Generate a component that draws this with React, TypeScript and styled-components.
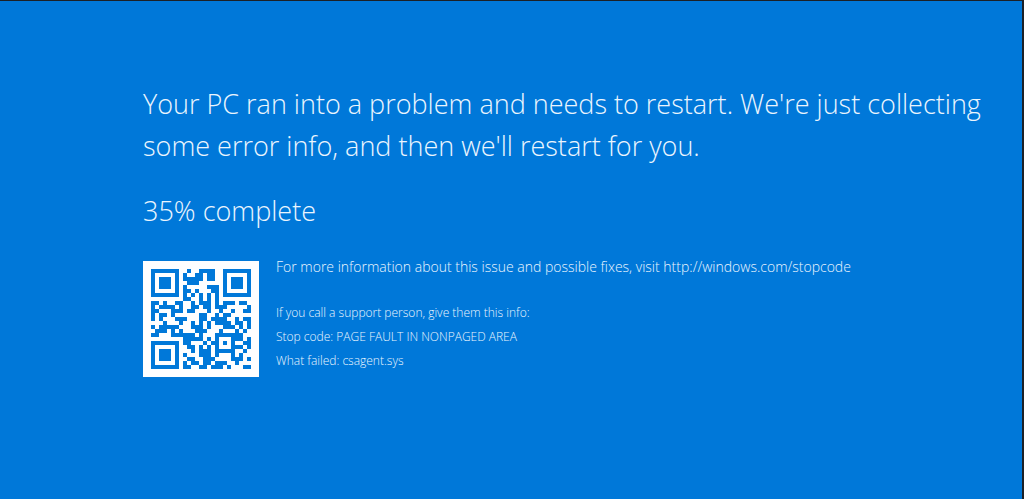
import React from "react";
import styled, { createGlobalStyle } from "styled-components";

const GlobalStyle = createGlobalStyle`
  *, *::before, *::after { box-sizing: border-box; }
  body { margin: 0; background: #1c2024; }
`;

const Screen = styled.main`
  min-height: 100vh;
  padding: 82px 40px 40px 143px;
  border: solid #1c2127;
  border-width: 1px 2px 0 0;
  background: #0078d9;
  color: #ebf5fe;
  font-family: "Open Sans", "Noto Sans", sans-serif;
  font-weight: 300;
`;

const Message = styled.h1`
  margin: 0;
  font-size: 27px;
  font-weight: 300;
  line-height: 42px;
`;

const Progress = styled.p`
  margin: 23px 0 0;
  font-size: 27px;
  line-height: 42px;
`;

const Details = styled.section`
  display: flex;
  align-items: flex-start;
  gap: 17px;
  margin-top: 29px;
`;

const CodeCard = styled.div`
  flex: none;
  padding: 8px;
  background: #fdfeff;
`;

const CodeImage = styled.svg`
  display: block;
  width: 100px;
  height: 100px;
`;

const Info = styled.div`
  flex: 1;
  min-width: 0;
`;

const Lead = styled.p`
  margin: 0 0 28px;
  font-size: 14px;
  line-height: 12px;
`;

const InfoLine = styled.p`
  margin: 0;
  font-size: 12px;
  line-height: 24px;
`;

const Link = styled.a`
  color: inherit;
  text-decoration: none;
`;

const SIZE = 25;
const DATA_WORDS = 34;
const CHECK_WORDS = 10;
const FORMAT_BITS = "110100101110110";

function multiply(a: number, b: number): number {
  let out = 0;
  for (let i = 7; i >= 0; i--) {
    out = (out << 1) ^ ((out >> 7) * 0x11d);
    if ((b >> i) & 1) out ^= a;
  }
  return out;
}

function checkWords(data: number[]): number[] {
  const divisor: number[] = Array(CHECK_WORDS).fill(0);
  divisor[CHECK_WORDS - 1] = 1;
  let root = 1;
  for (let i = 0; i < CHECK_WORDS; i++) {
    for (let j = 0; j < CHECK_WORDS; j++) {
      divisor[j] = multiply(divisor[j], root);
      if (j + 1 < CHECK_WORDS) divisor[j] ^= divisor[j + 1];
    }
    root = multiply(root, 2);
  }
  const rest: number[] = Array(CHECK_WORDS).fill(0);
  for (const word of data) {
    const factor = word ^ (rest.shift() as number);
    rest.push(0);
    divisor.forEach((d, i) => (rest[i] ^= multiply(d, factor)));
  }
  return rest;
}

/* Encodes up to 32 ASCII characters as a version 2-L code with mask 7. */
function encode(text: string): boolean[][] {
  let bits = "0100" + text.length.toString(2).padStart(8, "0");
  for (const ch of text) bits += ch.charCodeAt(0).toString(2).padStart(8, "0");
  bits += "0000";
  const words = (bits.match(/.{8}/g) || []).map((b) => parseInt(b, 2));
  for (let pad = 0xec; words.length < DATA_WORDS; pad ^= 0xfd) words.push(pad);
  const stream = [...words, ...checkWords(words)]
    .map((w) => w.toString(2).padStart(8, "0"))
    .join("");

  const grid: (boolean | null)[][] = Array.from({ length: SIZE }, () => Array(SIZE).fill(null));

  for (let i = 0; i < SIZE; i++) {
    grid[6][i] = i % 2 === 0;
    grid[i][6] = i % 2 === 0;
  }
  for (const [cy, cx] of [[3, 3], [3, SIZE - 4], [SIZE - 4, 3]]) {
    for (let dy = -4; dy <= 4; dy++) {
      for (let dx = -4; dx <= 4; dx++) {
        const y = cy + dy;
        const x = cx + dx;
        if (y < 0 || x < 0 || y >= SIZE || x >= SIZE) continue;
        const ring = Math.max(Math.abs(dx), Math.abs(dy));
        grid[y][x] = ring !== 2 && ring !== 4;
      }
    }
  }
  for (let dy = -2; dy <= 2; dy++) {
    for (let dx = -2; dx <= 2; dx++) {
      grid[18 + dy][18 + dx] = Math.max(Math.abs(dx), Math.abs(dy)) !== 1;
    }
  }

  const rowCols = [0, 1, 2, 3, 4, 5, 7, 8];
  for (let i = 0; i < 15; i++) {
    const on = FORMAT_BITS[i] === "1";
    if (i < 8) grid[8][rowCols[i]] = on;
    else grid[rowCols[14 - i]][8] = on;
    if (i < 7) grid[SIZE - 1 - i][8] = on;
    else grid[8][SIZE - 15 + i] = on;
  }
  grid[SIZE - 8][8] = true;

  let at = 0;
  let up = true;
  for (let right = SIZE - 1; right >= 1; right -= 2) {
    if (right === 6) right = 5;
    for (let step = 0; step < SIZE; step++) {
      const y = up ? SIZE - 1 - step : step;
      for (const x of [right, right - 1]) {
        if (grid[y][x] !== null) continue;
        const bit = stream[at++] === "1";
        const flip = (((y + x) % 2) + ((y * x) % 3)) % 2 === 0;
        grid[y][x] = bit !== flip;
      }
    }
    up = !up;
  }
  return grid.map((row) => row.map(Boolean));
}

function QrCode({ value }: { value: string }) {
  const path = encode(value)
    .map((row, y) => row.map((on, x) => (on ? `M${x} ${y}h1v1h-1z` : "")).join(""))
    .join("");
  return (
    <CodeCard>
      <CodeImage viewBox={`0 0 ${SIZE} ${SIZE}`} role="img" aria-label="QR code" shapeRendering="crispEdges">
        <path d={path} fill="#0078d9" />
      </CodeImage>
    </CodeCard>
  );
}

const STOP_URL = "http://windows.com/stopcode";

export default function App() {
  return (
    <>
      <GlobalStyle />
      <Screen>
        <Message>
          Your PC ran into a problem and needs to restart. We're just collecting some error info,
          and then we'll restart for you.
        </Message>
        <Progress>35% complete</Progress>
        <Details>
          <QrCode value={STOP_URL} />
          <Info>
            <Lead>
              For more information about this issue and possible fixes, visit{" "}
              <Link href={STOP_URL}>{STOP_URL}</Link>
            </Lead>
            <InfoLine>If you call a support person, give them this info:</InfoLine>
            <InfoLine>Stop code: PAGE FAULT IN NONPAGED AREA</InfoLine>
            <InfoLine>What failed: csagent.sys</InfoLine>
          </Info>
        </Details>
      </Screen>
    </>
  );
}
